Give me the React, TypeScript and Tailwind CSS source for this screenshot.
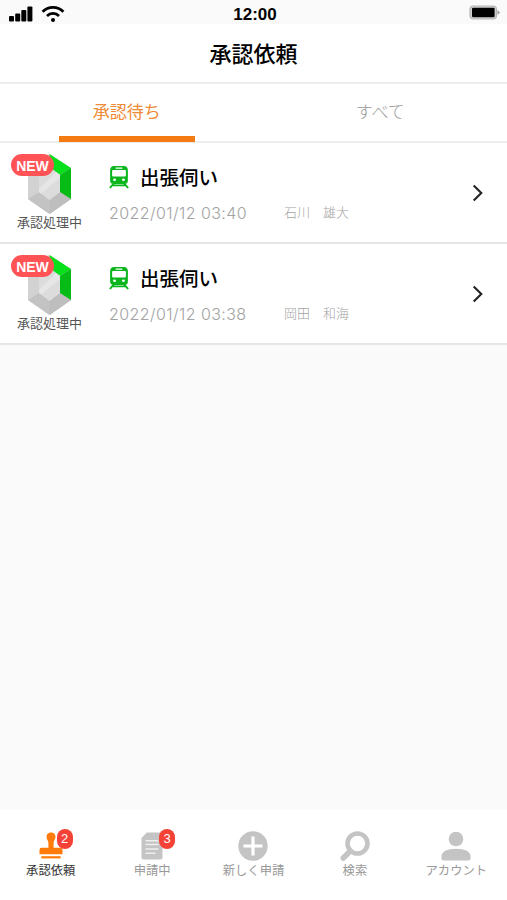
import React from 'react';
import clsx from 'clsx';

interface ApprovalRequest {
  id: number;
  title: string;
  status: string;
  date: string;
  applicant: string;
}

interface NavItem {
  label: string;
  icon: React.ReactNode;
  badge?: number;
  active?: boolean;
}

const requests: ApprovalRequest[] = [
  { id: 1, title: '出張伺い', status: '承認処理中', date: '2022/01/12 03:40', applicant: '石川　雄大' },
  { id: 2, title: '出張伺い', status: '承認処理中', date: '2022/01/12 03:38', applicant: '岡田　和海' },
];

const SignalIcon = () => (
  <svg width="24" height="16" viewBox="0 0 24 16">
    <rect x="0" y="10" width="5" height="5.5" rx="1" />
    <rect x="6.2" y="7.5" width="5" height="8" rx="1" />
    <rect x="12.3" y="4" width="5" height="11.5" rx="1" />
    <rect x="18.4" y="0.5" width="5" height="15" rx="1" />
  </svg>
);

const WifiIcon = () => (
  <svg width="24" height="18" viewBox="0 0 24 18" fill="none" stroke="#000" strokeWidth="2.7">
    <path d="M1.6 6.8C7.2 0.9 16.8 0.9 22.4 6.8" />
    <path d="M6 11C9.3 7.6 14.7 7.6 18 11" />
    <circle cx="12" cy="14.9" r="2" fill="#000" stroke="none" />
  </svg>
);

const BatteryIcon = () => (
  <svg width="32" height="16" viewBox="0 0 32 16">
    <rect x="1" y="1" width="26.5" height="13" rx="3.5" fill="#d0d0d0" stroke="#b5b5b5" strokeWidth="1.2" />
    <rect x="3" y="2.8" width="22.6" height="9.4" rx="1.2" />
    <path d="M28.5 5L31 7.5L28.5 10Z" fill="#999" />
  </svg>
);

const GemIcon = () => (
  <svg width="43" height="60" viewBox="0 0 43 60">
    <path d="M21.5 0L43 14V45L21.5 60L0 45V14Z" fill="#d2d2d2" />
    <path d="M21.5 0L0 14L11 21L21.5 13Z" fill="#dedede" />
    <path d="M0 14L11 21V38L0 45Z" fill="#d2d2d2" />
    <path d="M0 45L11 38L21.5 46L32 38L43 45L21.5 60Z" fill="#c3c3c3" />
    <path d="M21.5 46L32 38L43 45L21.5 60Z" fill="#bebebe" />
    <path d="M21.5 0L43 14L32 21L21.5 13Z" fill="#08e01b" />
    <path d="M43 14L32 21V38L43 45Z" fill="#06bb16" />
    <path d="M21.5 13L32 21V38L21.5 46L11 38V21Z" fill="#dcdcdc" />
    <path d="M28 18L32 21V24L13 39.5L11 38V35Z" fill="#e6e6e6" />
  </svg>
);

const TrainIcon = () => (
  <svg width="20" height="23" viewBox="0 0 18 23" preserveAspectRatio="none">
    <path
      fill="#0bb51d"
      fillRule="evenodd"
      d="M4.5 0H13.5Q17 0 17 4.5V14.5Q17 18 13.5 18H4.5Q1 18 1 14.5V4.5Q1 0 4.5 0ZM6 1.6V2.8H12V1.6ZM3.7 4Q2.8 4 2.8 5V9.5Q2.8 10.5 3.8 10.5H14.2Q15.2 10.5 15.2 9.5V5Q15.2 4 14.3 4ZM5 12.5A1.3 1.3 0 1 0 5 15.1A1.3 1.3 0 1 0 5 12.5ZM13 12.5A1.3 1.3 0 1 0 13 15.1A1.3 1.3 0 1 0 13 12.5Z"
    />
    <path d="M4.3 17.5L0.8 22M13.7 17.5L17.2 22M3.5 19.3H14.5" stroke="#0bb51d" strokeWidth="1.8" />
  </svg>
);

const ChevronIcon = () => (
  <svg width="12" height="18" viewBox="0 0 12 18" fill="none" stroke="#222" strokeWidth="2.1">
    <path d="M1.7 1.5L9.3 9L1.7 16.5" />
  </svg>
);

const StampIcon = () => (
  <svg width="24" height="28" viewBox="0 0 24 28" fill="#ff7c0a">
    <path d="M12 0.5C14.8 0.5 16.5 2.4 16.5 4.8C16.5 7.5 14.6 8.6 14.6 11V15.8H21.5Q23.5 15.8 23.5 18V22.3H0.5V18Q0.5 15.8 2.5 15.8H9.4V11C9.4 8.6 7.5 7.5 7.5 4.8C7.5 2.4 9.2 0.5 12 0.5Z" />
    <rect x="2.3" y="24.2" width="19.4" height="2.2" />
  </svg>
);

const DocumentIcon = () => (
  <svg width="22" height="28" viewBox="0 0 22 28">
    <path d="M5.8 0.5H19.5Q21.5 0.5 21.5 2.5V25.5Q21.5 27.5 19.5 27.5H2.5Q0.5 27.5 0.5 25.5V6Z" fill="#c4c4c4" />
    <path d="M4.5 8.8H17.5M4.5 12.6H17.5M4.5 16.9H17.5M4.5 21.3H14.5" stroke="#eee" strokeWidth="1.5" />
  </svg>
);

const PlusIcon = () => (
  <svg width="30" height="30" viewBox="0 0 30 30">
    <circle cx="15" cy="15" r="14.7" fill="#c4c4c4" />
    <path d="M15 5.5V24.5M5.5 15H24.5" stroke="#fff" strokeWidth="3.2" />
  </svg>
);

const SearchIcon = () => (
  <svg width="30" height="30" viewBox="0 0 30 30" fill="none" stroke="#c4c4c4">
    <circle cx="17.5" cy="12.5" r="10" strokeWidth="4.6" />
    <path d="M10.3 20L3.3 27" strokeWidth="5.6" strokeLinecap="round" />
  </svg>
);

const AccountIcon = () => (
  <svg width="30" height="30" viewBox="0 0 30 30" fill="#c4c4c4">
    <circle cx="15" cy="8" r="7.3" />
    <path d="M0.3 26.5C0.3 20.5 6 17.8 15 17.8S29.7 20.5 29.7 26.5Q29.7 29.5 27 29.5H3Q0.3 29.5 0.3 26.5Z" />
  </svg>
);

const navItems: NavItem[] = [
  { label: '承認依頼', icon: <StampIcon />, badge: 2, active: true },
  { label: '申請中', icon: <DocumentIcon />, badge: 3 },
  { label: '新しく申請', icon: <PlusIcon /> },
  { label: '検索', icon: <SearchIcon /> },
  { label: 'アカウント', icon: <AccountIcon /> },
];

const RequestRow: React.FC<{ request: ApprovalRequest }> = ({ request }) => (
  <li className="flex h-[101px] border-b-2 border-[#e6e6e6] bg-white pr-[23px]">
    <div className="relative flex w-[99px] shrink-0 flex-col items-center pt-[11px]">
      <GemIcon />
      <span className="-mt-px text-[13px] leading-[18px] text-[#555]">{request.status}</span>
      <span className="absolute top-[11px] left-[11px] flex h-[22px] w-[43px] items-center justify-center rounded-full bg-[#ff5356] pt-[2px] font-['Liberation_Sans'] text-[14px] font-bold text-white">
        NEW
      </span>
    </div>
    <div className="flex-1 pl-[10px]">
      <div className="mt-5 flex h-7 items-center gap-[11px]">
        <TrainIcon />
        <h2 className="pb-px text-[19.5px] leading-7 font-medium text-black">{request.title}</h2>
      </div>
      <div className="mt-[9px] flex h-6 items-center text-[#a3a3a3]">
        <span className="w-[175px] pt-px font-[Inter] text-[16px] font-light tracking-[0.42px]">{request.date}</span>
        <span className="text-[13px] font-light">{request.applicant}</span>
      </div>
    </div>
    <div className="flex items-center">
      <ChevronIcon />
    </div>
  </li>
);

export default function App() {
  return (
    <div className="flex h-[900px] w-[507px] flex-col overflow-hidden bg-[#fafafa] font-['Noto_Sans_CJK_JP',sans-serif]">
      <div className="grid h-6 shrink-0 grid-cols-3 items-start pl-[9px] pr-[6px]">
        <div className="flex items-center gap-2 pt-[5px]">
          <SignalIcon />
          <WifiIcon />
        </div>
        <span className="pt-[3px] text-center font-['Liberation_Sans'] text-[17px] leading-6 font-bold">12:00</span>
        <div className="flex justify-end pt-[5px]">
          <BatteryIcon />
        </div>
      </div>

      <header className="flex h-[60px] shrink-0 items-center justify-center border-b-2 border-[#ededed] bg-white pb-[2px]">
        <h1 className="text-[22px] leading-8 font-medium text-black">承認依頼</h1>
      </header>

      <div className="grid h-[59px] shrink-0 grid-cols-2 border-b-2 border-[#ededed] bg-white text-[17px]">
        <button className="relative pb-[3px] text-[#ee8a35]">
          承認待ち
          <span className="absolute -bottom-px left-[59px] h-[6px] w-[136px] bg-[#f47a13]" />
        </button>
        <button className="pb-[3px] font-light text-[#999]">すべて</button>
      </div>

      <ul>
        {requests.map(request => (
          <RequestRow key={request.id} request={request} />
        ))}
      </ul>

      <nav className="mt-auto grid h-[90px] shrink-0 grid-cols-5 bg-white">
        {navItems.map(item => (
          <div key={item.label} className="flex flex-col items-center pt-[21px]">
            <div className="relative flex h-[30px] items-center">
              {item.icon}
              {item.badge && (
                <span
                  className={clsx(
                    'absolute -top-[2px] flex h-5 w-4 items-center justify-center rounded-full bg-[#f44336] font-["Liberation_Sans"] text-[13px] text-white',
                    item.active ? '-right-[10px]' : '-right-[12px]'
                  )}
                >
                  {item.badge}
                </span>
              )}
            </div>
            <span className={clsx('text-[12.3px] leading-[18px] whitespace-nowrap', item.active ? 'text-[#333]' : 'text-[#999]')}>
              {item.label}
            </span>
          </div>
        ))}
      </nav>
    </div>
  );
}
